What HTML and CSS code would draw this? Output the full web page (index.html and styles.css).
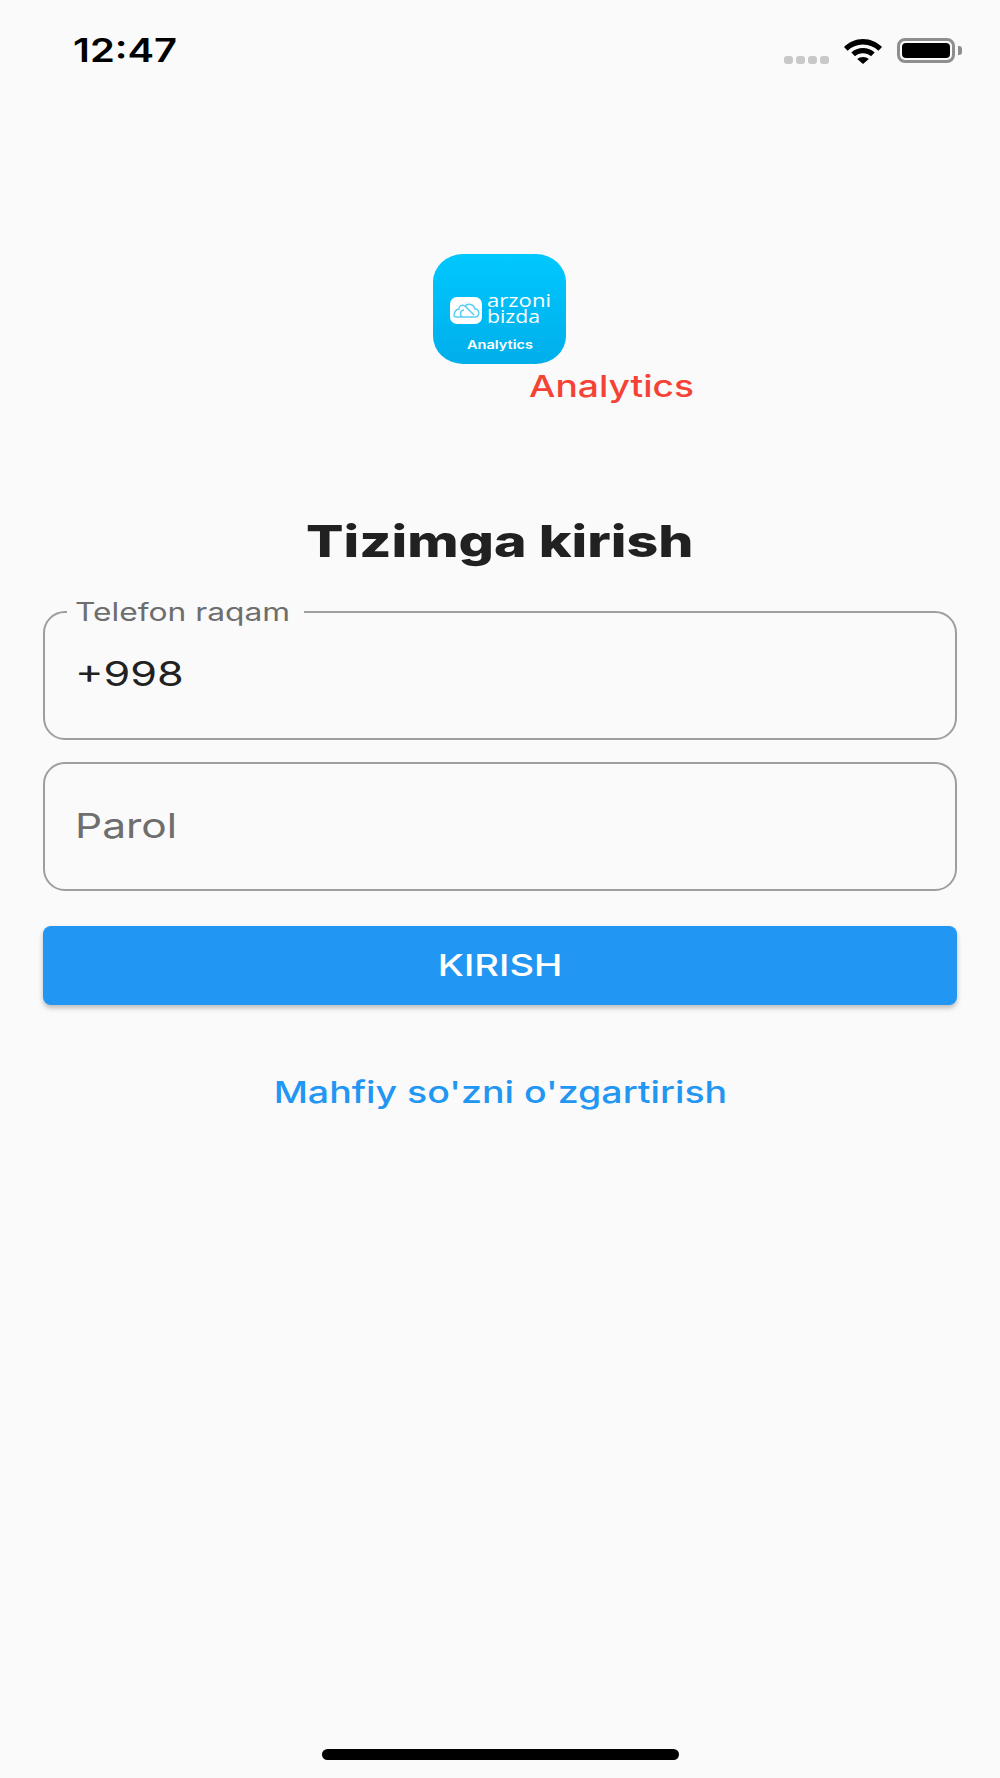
FILE: index.html
```html
<!DOCTYPE html>
<html lang="en">

<head>
  <meta charset="utf-8" />
  <title>Tizimga kirish</title>
  <link rel="stylesheet" href="styles.css">
</head>

<body>
  <div id="root">
    <div class="status-bar">
      <span class="status-time"><span class="wide">12:47</span></span>
      <div class="status-icons">
        <div class="signal"><i></i><i></i><i></i><i></i></div>
        <svg class="wifi" width="40" height="26" viewBox="0 0 40 26">
          <path d="M20 1C12.500 1 6 4 1 9l3.600 3.800C8.700 8.900 14 6.600 20 6.600s11.300 2.300 15.400 6.200L39 9C34 4 27.500 1 20 1Z" fill="#000" />
          <path d="M20 10c-4.600 0-8.600 1.700-11.700 4.500l3.700 3.800c2.100-1.900 4.900-3 8-3s5.900 1.100 8 3l3.700-3.800C28.600 11.700 24.600 10 20 10Z" fill="#000" />
          <path d="M20 19c-2.300 0-4.300.8-5.800 2.100L20 26l5.800-4.900C24.300 19.800 22.300 19 20 19Z" fill="#000" />
        </svg>
        <div class="battery">
          <div class="battery-fill"></div>
        </div>
        <div class="battery-cap"></div>
      </div>
    </div>

    <div class="brand">
      <svg class="logo" width="133" height="110" viewBox="0 0 133 110">
        <defs>
          <linearGradient id="logo_bg" x1="0" x2="0" y1="0" y2="1">
            <stop stop-color="#00c8ff" />
            <stop offset="1" stop-color="#00aeea" />
          </linearGradient>
        </defs>
        <rect width="133" height="110" rx="30" ry="28" fill="url(#logo_bg)" />
        <rect x="17" y="43" width="32" height="27" rx="7" fill="#fff" />
        <path d="M23 63h19c5 0 5-8 0-8-1-5-7-6-10-3-3-2-6 0-6 3-4 0-7 8-3 8Z" fill="none" stroke="#5ccdf3" stroke-width="1.500" />
        <path d="M29 63c-3-3-1-7 2-7M32 52l9 9" fill="none" stroke="#5ccdf3" stroke-width="1.500" />
        <text class="logo-word" x="54" y="53" textLength="64" lengthAdjust="spacingAndGlyphs">arzoni</text>
        <text class="logo-word" x="54" y="69" textLength="53" lengthAdjust="spacingAndGlyphs">bizda</text>
        <text class="logo-tag" x="34" y="95" textLength="66" lengthAdjust="spacingAndGlyphs">Analytics</text>
      </svg>
      <div class="brand-sub"><span class="wide">Analytics</span></div>
    </div>

    <h1 class="title"><span class="wide">Tizimga kirish</span></h1>

    <form class="login-form">
      <fieldset class="field">
        <legend class="field-label"><span class="wide">Telefon raqam</span></legend>
        <div class="field-value"><span class="wide">+998</span></div>
      </fieldset>
      <div class="field field-plain">
        <div class="field-hint"><span class="wide">Parol</span></div>
      </div>
      <div class="btn-login"><span class="wide">KIRISH</span></div>
      <div class="link-reset"><span class="wide">Mahfiy so'zni o'zgartirish</span></div>
    </form>

    <div class="home-bar"></div>
  </div>
</body>

</html>
```

FILE: styles.css
```css
:root {
  --blue: #2196f3;
  --red: #f44336;
  --line: #9e9e9e;
}

html,
body,
#root {
  height: 100%;
  margin: 0;
}

body {
  background-color: #fafafa;
  color: #212121;
  font-family: Inter, "Liberation Sans", sans-serif;
}

#root {
  display: flex;
  flex-direction: column;
}

/* screenshot is stretched sideways, so text gets widened too */
.wide {
  display: inline-block;
  transform: scaleX(var(--sx, 1.2));
  white-space: nowrap;
}

.status-bar {
  display: flex;
  justify-content: space-between;
  align-items: flex-start;
  height: 254px;
  padding: 30px 38px 0 73px;
  box-sizing: border-box;
}

.status-time {
  --sx: 1.21;
  font-size: 33px;
  font-weight: 600;
  line-height: 40px;
  color: #000;
}

.status-time .wide {
  transform-origin: left center;
}

.status-icons {
  display: flex;
  align-items: center;
  margin-top: 7px;
}

.signal {
  display: flex;
  gap: 3px;
  margin: 19px 14px 0 0;
}

.signal i {
  width: 9px;
  height: 8px;
  border-radius: 3px;
  background: #c8c8c8;
}

.wifi {
  margin-right: 14px;
}

.battery {
  width: 58px;
  height: 25px;
  padding: 2px;
  box-sizing: border-box;
  border: 3px solid #8e8e8e;
  border-radius: 8px;
}

.battery-fill {
  height: 100%;
  background: #000;
  border-radius: 4px;
}

.battery-cap {
  width: 4px;
  height: 9px;
  margin-left: 3px;
  background: #8e8e8e;
  border-radius: 0 3px 3px 0;
}

.brand {
  display: flex;
  flex-direction: column;
  align-items: center;
}

.logo {
  display: block;
  margin-right: 2px;
}

.logo-word {
  font-family: "Open Sans", sans-serif;
  font-size: 18px;
  font-weight: 400;
  fill: #fff;
}

.logo-tag {
  font-size: 12px;
  font-weight: 600;
  fill: #fff;
}

.brand-sub {
  --sx: 1.24;
  padding-left: 223px;
  font-size: 30px;
  font-weight: 500;
  line-height: 44px;
  color: var(--red);
}

.title {
  --sx: 1.26;
  margin: 107px 0 0;
  font-size: 44px;
  font-weight: 800;
  line-height: 52px;
  text-align: center;
}

.login-form {
  display: flex;
  flex-direction: column;
  padding: 0 43px;
  margin-top: 32px;
}

.field {
  height: 141px;
  margin: 0;
  padding: 0 31px;
  box-sizing: border-box;
  border: 2px solid var(--line);
  border-radius: 22px;
  min-width: 0;
}

.field-label {
  --sx: 1.27;
  width: 237px;
  height: 26px;
  padding: 0 0 0 8px;
  box-sizing: border-box;
  margin-left: -9px;
  font-size: 25px;
  line-height: 26px;
  color: #6e6e6e;
}

.field-label .wide,
.field-value .wide,
.field-hint .wide {
  transform-origin: left center;
}

.field-value {
  --sx: 1.27;
  margin-left: -1px;
  padding-top: 29px;
  font-size: 34px;
  line-height: 40px;
}

.field-plain {
  height: 129px;
  margin-top: 22px;
}

.field-hint {
  --sx: 1.25;
  margin-left: -1px;
  padding-top: 33px;
  font-size: 34px;
  line-height: 58px;
  color: #6e6e6e;
}

.btn-login {
  --sx: 1.27;
  height: 79px;
  margin-top: 35px;
  background: var(--blue);
  border-radius: 8px;
  box-shadow: 0 3px 5px rgba(0, 0, 0, .25);
  color: #fff;
  font-size: 30px;
  font-weight: 500;
  line-height: 79px;
  text-align: center;
}

.link-reset {
  --sx: 1.25;
  margin-top: 67px;
  color: var(--blue);
  font-size: 30px;
  font-weight: 500;
  line-height: 40px;
  text-align: center;
}

.home-bar {
  width: 357px;
  height: 11px;
  margin: auto auto 18px;
  background: #000;
  border-radius: 6px;
}
```
